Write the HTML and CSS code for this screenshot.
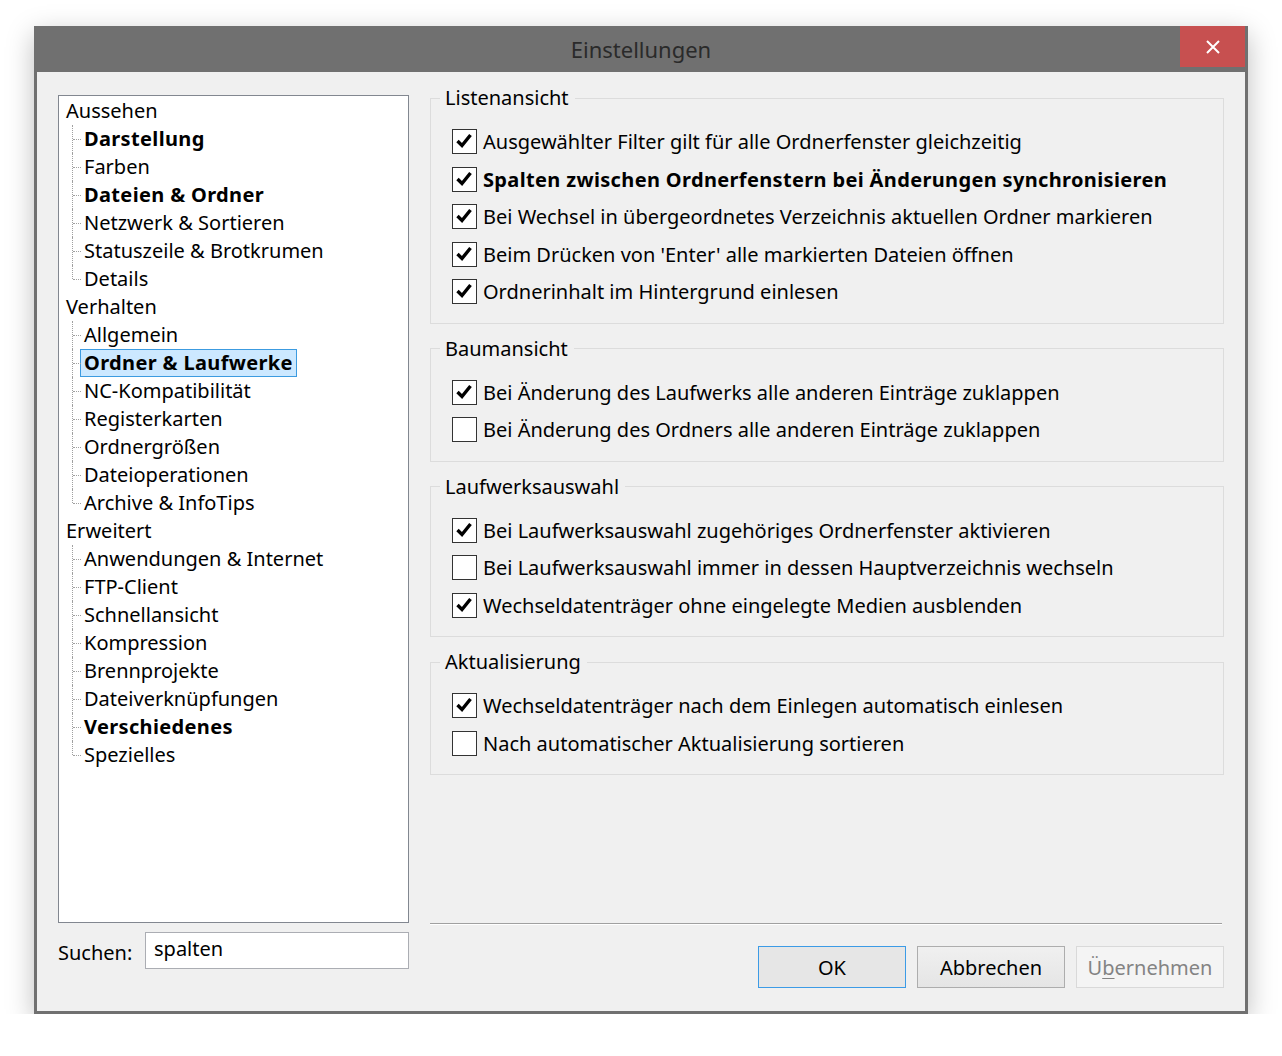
FILE: index.html
```html
<!DOCTYPE html>
<html lang="de">
<head>
<meta charset="utf-8">
<title>Einstellungen</title>
<link rel="stylesheet" href="styles.css">
</head>
<body>
<div class="window">
  <div class="titlebar">
    <span class="tb-side"></span>
    <span class="title">Einstellungen</span>
    <span class="close" aria-label="Schließen"><svg width="14" height="14" viewBox="0 0 14 14"><path d="M1 1L13 13M13 1L1 13" stroke="#fff" stroke-width="2" fill="none"/></svg></span>
  </div>
  <div class="client">
    <div class="left">
      <div class="tree">
        <ul class="roots">
          <li><span class="label">Aussehen</span>
            <ul class="children">
              <li><span class="label bold">Darstellung</span></li>
              <li><span class="label">Farben</span></li>
              <li><span class="label bold">Dateien &amp; Ordner</span></li>
              <li><span class="label">Netzwerk &amp; Sortieren</span></li>
              <li><span class="label">Statuszeile &amp; Brotkrumen</span></li>
              <li><span class="label">Details</span></li>
            </ul>
          </li>
          <li><span class="label">Verhalten</span>
            <ul class="children">
              <li><span class="label">Allgemein</span></li>
              <li><span class="label bold selected">Ordner &amp; Laufwerke</span></li>
              <li><span class="label">NC-Kompatibilität</span></li>
              <li><span class="label">Registerkarten</span></li>
              <li><span class="label">Ordnergrößen</span></li>
              <li><span class="label">Dateioperationen</span></li>
              <li><span class="label">Archive &amp; InfoTips</span></li>
            </ul>
          </li>
          <li><span class="label">Erweitert</span>
            <ul class="children">
              <li><span class="label">Anwendungen &amp; Internet</span></li>
              <li><span class="label">FTP-Client</span></li>
              <li><span class="label">Schnellansicht</span></li>
              <li><span class="label">Kompression</span></li>
              <li><span class="label">Brennprojekte</span></li>
              <li><span class="label">Dateiverknüpfungen</span></li>
              <li><span class="label bold">Verschiedenes</span></li>
              <li><span class="label">Spezielles</span></li>
            </ul>
          </li>
        </ul>
      </div>
      <div class="search">
        <span class="search-label">Suchen:</span>
        <div class="search-input">spalten</div>
      </div>
    </div>
    <div class="right">
      <fieldset class="group">
        <legend>Listenansicht</legend>
        <div class="row"><span class="cb checked"><svg width="23" height="23" viewBox="0 0 23 23"><path d="M4.5 11L9 15.5L17.5 5" stroke="#000" stroke-width="3.4" fill="none"/></svg></span><span>Ausgewählter Filter gilt für alle Ordnerfenster gleichzeitig</span></div>
        <div class="row bold"><span class="cb checked"><svg width="23" height="23" viewBox="0 0 23 23"><path d="M4.5 11L9 15.5L17.5 5" stroke="#000" stroke-width="3.4" fill="none"/></svg></span><span>Spalten zwischen Ordnerfenstern bei Änderungen synchronisieren</span></div>
        <div class="row"><span class="cb checked"><svg width="23" height="23" viewBox="0 0 23 23"><path d="M4.5 11L9 15.5L17.5 5" stroke="#000" stroke-width="3.4" fill="none"/></svg></span><span>Bei Wechsel in übergeordnetes Verzeichnis aktuellen Ordner markieren</span></div>
        <div class="row"><span class="cb checked"><svg width="23" height="23" viewBox="0 0 23 23"><path d="M4.5 11L9 15.5L17.5 5" stroke="#000" stroke-width="3.4" fill="none"/></svg></span><span>Beim Drücken von 'Enter' alle markierten Dateien öffnen</span></div>
        <div class="row"><span class="cb checked"><svg width="23" height="23" viewBox="0 0 23 23"><path d="M4.5 11L9 15.5L17.5 5" stroke="#000" stroke-width="3.4" fill="none"/></svg></span><span>Ordnerinhalt im Hintergrund einlesen</span></div>
      </fieldset>
      <fieldset class="group">
        <legend>Baumansicht</legend>
        <div class="row"><span class="cb checked"><svg width="23" height="23" viewBox="0 0 23 23"><path d="M4.5 11L9 15.5L17.5 5" stroke="#000" stroke-width="3.4" fill="none"/></svg></span><span>Bei Änderung des Laufwerks alle anderen Einträge zuklappen</span></div>
        <div class="row"><span class="cb"></span><span>Bei Änderung des Ordners alle anderen Einträge zuklappen</span></div>
      </fieldset>
      <fieldset class="group">
        <legend>Laufwerksauswahl</legend>
        <div class="row"><span class="cb checked"><svg width="23" height="23" viewBox="0 0 23 23"><path d="M4.5 11L9 15.5L17.5 5" stroke="#000" stroke-width="3.4" fill="none"/></svg></span><span>Bei Laufwerksauswahl zugehöriges Ordnerfenster aktivieren</span></div>
        <div class="row"><span class="cb"></span><span>Bei Laufwerksauswahl immer in dessen Hauptverzeichnis wechseln</span></div>
        <div class="row"><span class="cb checked"><svg width="23" height="23" viewBox="0 0 23 23"><path d="M4.5 11L9 15.5L17.5 5" stroke="#000" stroke-width="3.4" fill="none"/></svg></span><span>Wechseldatenträger ohne eingelegte Medien ausblenden</span></div>
      </fieldset>
      <fieldset class="group">
        <legend>Aktualisierung</legend>
        <div class="row"><span class="cb checked"><svg width="23" height="23" viewBox="0 0 23 23"><path d="M4.5 11L9 15.5L17.5 5" stroke="#000" stroke-width="3.4" fill="none"/></svg></span><span>Wechseldatenträger nach dem Einlegen automatisch einlesen</span></div>
        <div class="row"><span class="cb"></span><span>Nach automatischer Aktualisierung sortieren</span></div>
      </fieldset>
      <div class="spacer"></div>
      <div class="separator"></div>
      <div class="buttons">
        <span class="btn default">OK</span>
        <span class="btn">Abbrechen</span>
        <span class="btn disabled">Ü<u>b</u>ernehmen</span>
      </div>
    </div>
  </div>
</div>
</body>
</html>
```

FILE: styles.css
```css
html, body {
  margin: 0;
  padding: 0;
  background: #ffffff;
}

body {
  font-family: "Noto Sans", "Open Sans", sans-serif;
  font-size: 20px;
  color: #000;
}

.window {
  margin: 26px 0 0 34px;
  width: 1208px;
  height: 985px;
  padding: 0 3px 3px 3px;
  background: #707070;
  box-shadow: 0 8px 26px rgba(0, 0, 0, 0.26);
  display: flex;
  flex-direction: column;
}

.titlebar {
  height: 46px;
  display: grid;
  grid-template-columns: 65px 1fr 65px;
  align-items: start;
}

.title {
  align-self: center;
  text-align: center;
  font-size: 22px;
  color: #2a2a2a;
  line-height: 46px;
}

.close {
  height: 41px;
  background: #c75050;
  display: flex;
  align-items: center;
  justify-content: center;
}

.client {
  flex: 1;
  background: #f0f0f0;
  display: grid;
  grid-template-columns: 351px 1fr;
  column-gap: 21px;
  padding: 14px 21px 23px 21px;
  min-height: 0;
}

/* Left column */
.left {
  display: flex;
  flex-direction: column;
  padding-top: 9px;
  min-height: 0;
}

.tree {
  flex: 1;
  background: #fff;
  border: 1px solid #828790;
  padding-top: 1px;
  overflow: hidden;
}

.tree ul {
  list-style: none;
  margin: 0;
  padding: 0;
}

.tree li {
  line-height: 26px;
}

.label {
  display: inline-block;
  border: 1px solid transparent;
  padding: 0 3px;
  margin-left: 3px;
  white-space: nowrap;
}

.bold {
  font-weight: bold;
  letter-spacing: 0.35px;
}

.children > li {
  position: relative;
}

.children > li > .label {
  margin-left: 21px;
}

.children > li::before {
  content: "";
  position: absolute;
  left: 13px;
  top: 0;
  bottom: 0;
  border-left: 1px dotted #a0a0a0;
}

.children > li:last-child::before {
  bottom: auto;
  height: 14px;
}

.children > li::after {
  content: "";
  position: absolute;
  left: 14px;
  top: 14px;
  width: 8px;
  border-top: 1px dotted #a0a0a0;
}

.label.selected {
  background: #cce8ff;
  border-color: #3c9be0;
}

.search {
  margin-top: 9px;
  margin-bottom: 19px;
  height: 37px;
  display: flex;
  align-items: center;
}

.search-label {
  width: 87px;
  padding-top: 3px;
}

.search-input {
  flex: 1;
  background: #fff;
  border: 1px solid #abadb3;
  padding: 0 8px;
  line-height: 31px;
  box-sizing: border-box;
  height: 37px;
}

/* Right column */
.right {
  display: flex;
  flex-direction: column;
  min-height: 0;
}

.group {
  margin: 13px 0 0 0;
  border: 1px solid #dcdcdc;
  padding: 13px 12px 12px 9px;
  min-width: 0;
}

.group:first-child {
  margin-top: 0;
}

.group legend {
  padding: 0 6px 0 5px;
  line-height: 24px;
}

.row {
  height: 37.5px;
  display: flex;
  align-items: center;
  margin-left: 12px;
  white-space: nowrap;
}

.cb {
  width: 23px;
  height: 23px;
  border: 1px solid #333;
  background: #fff;
  margin-right: 6px;
  flex: none;
  display: block;
}

.cb svg {
  display: block;
}

.spacer {
  flex: 1;
}

.separator {
  border-top: 1px solid #a0a0a0;
  border-bottom: 1px solid #ffffff;
  margin-right: 2px;
}

.buttons {
  margin-top: 21px;
  display: flex;
  justify-content: flex-end;
  gap: 11px;
}

.btn {
  width: 148px;
  height: 42px;
  box-sizing: border-box;
  border: 1px solid #adadad;
  background: linear-gradient(#f0f0f0, #e5e5e5);
  display: flex;
  align-items: center;
  justify-content: center;
  padding-top: 1px;
}

.btn.default {
  border-color: #3c9be6;
  background: #e6e6e6;
}

.btn.disabled {
  border-color: #d9d9d9;
  background: #f4f4f4;
  color: #838383;
}

.btn.disabled u {
  text-decoration-thickness: 1px;
  text-underline-offset: 3px;
}
```
